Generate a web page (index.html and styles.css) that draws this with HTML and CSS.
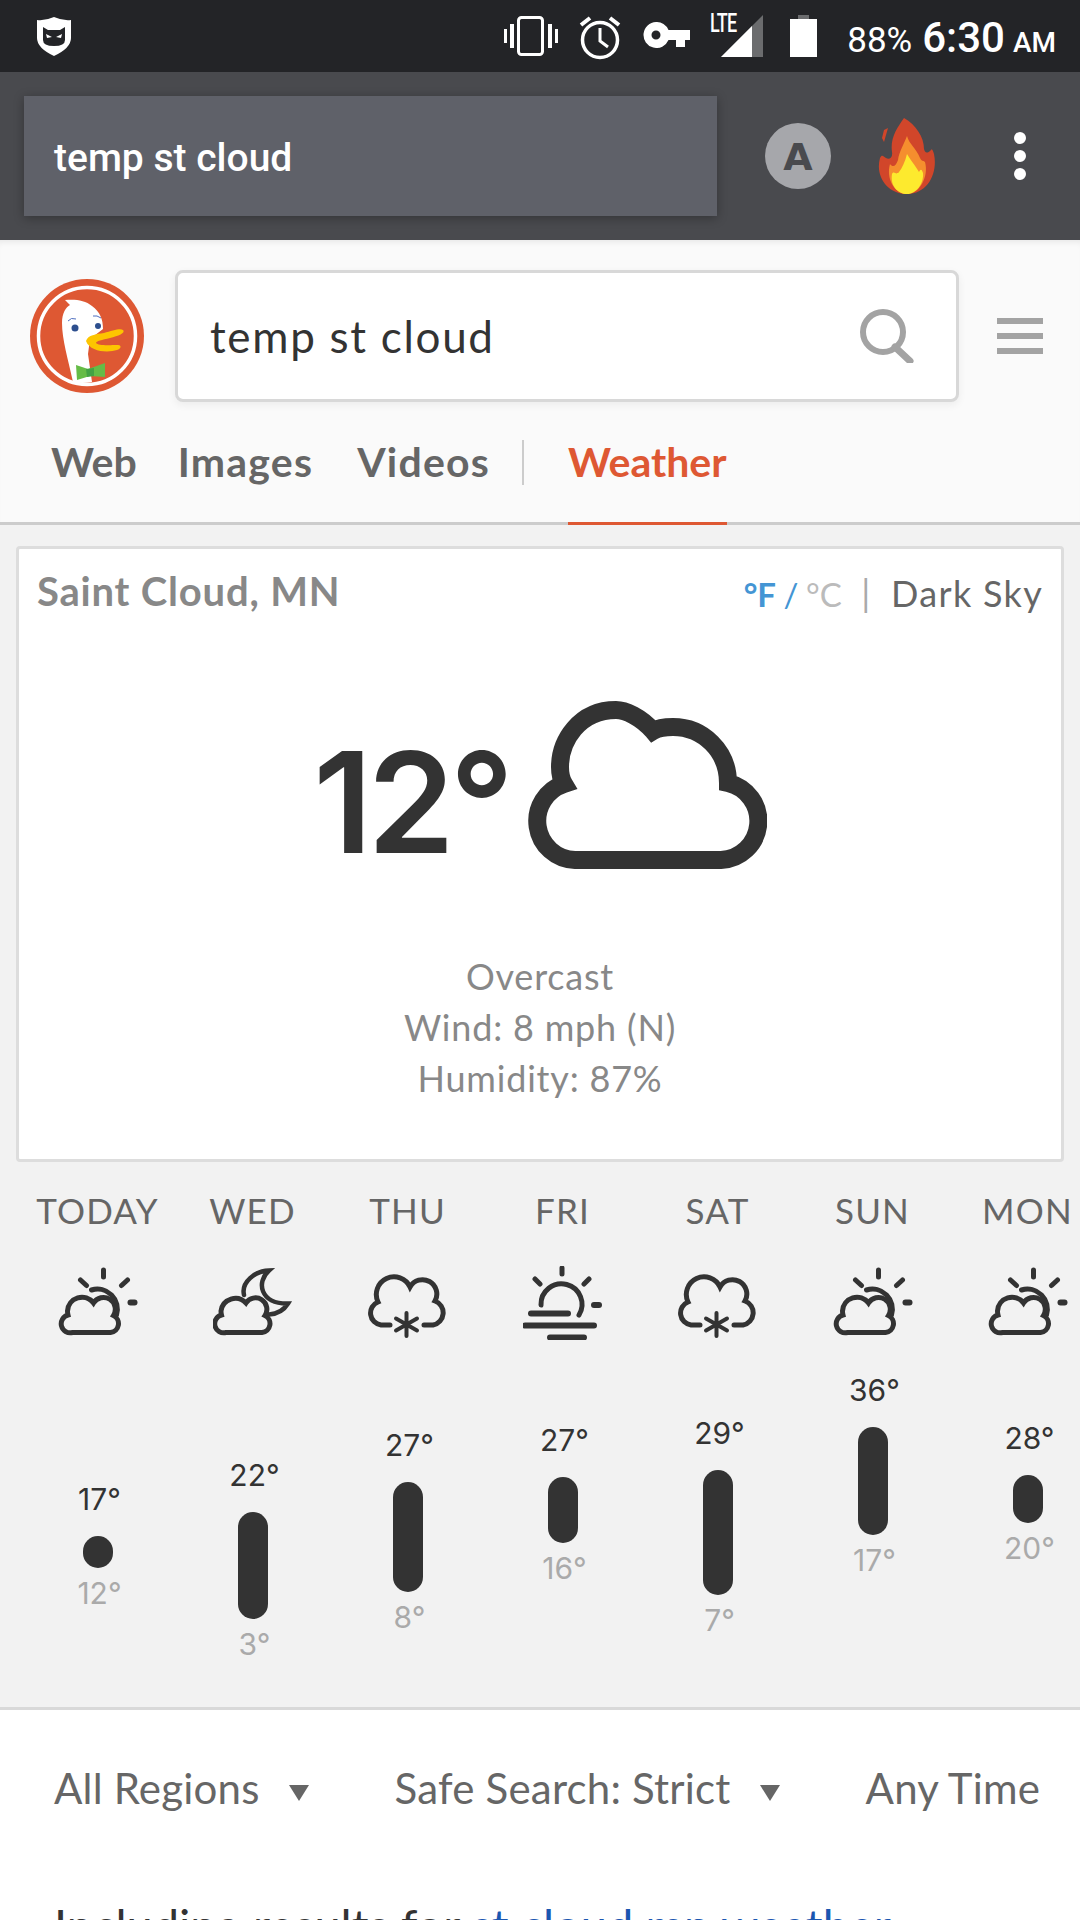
FILE: index.html
```html
<!DOCTYPE html>
<html lang="en">
<head>
    <meta charset="UTF-8">
    <meta name="viewport" content="width=device-width, initial-scale=1.0">
    <title>temp st cloud at DuckDuckGo</title>
    <link rel="stylesheet" href="styles.css">
</head>
<body>

    <svg class="icon-defs" width="0" height="0">
        <symbol id="partly" viewBox="0 0 80 70">
            <g fill="none" stroke="#333" stroke-width="5" stroke-linecap="round" transform="translate(1.500 0)">
                <path d="M13 64.500H51A9 9 0 0 0 54 47.500A11 11 0 0 0 34 35A14.500 14.500 0 0 0 8 43Q8 45 8.500 47A9 9 0 0 0 13 64.500Z"/>
                <path d="M32 22A20 20 0 0 1 57 47"/>
                <path d="M44 2V9M21 12L27 17.500M68 12L62 17.500"/>
                <path d="M71 34.500H75" stroke-width="6"/>
            </g>
        </symbol>
        <symbol id="night" viewBox="0 0 80 70">
            <g fill="none" stroke="#333" stroke-width="5" stroke-linecap="round">
                <path d="M13 64.500H49A9 9 0 0 0 52 47.500A11 11 0 0 0 33 35A14.500 14.500 0 0 0 8 43Q8 45 8.500 47A9 9 0 0 0 13 64.500Z"/>
                <path d="M31 27C28 14 42 3 56 2.500C43 14 47 36 75 35.500C71 42 64 46 56 46.500" stroke-width="4.500" stroke-linejoin="miter"/>
            </g>
        </symbol>
        <symbol id="snow" viewBox="0 0 80 70">
            <g fill="none" stroke="#333" stroke-width="5" stroke-linecap="round">
                <path d="M22 57H13A12 12 0 0 1 10 34A17 17 0 0 1 42 19A14 14 0 0 1 67 33A12.500 12.500 0 0 1 65 57H56"/>
                <path d="M38.500 45V68M28 50.500L49 62.500M49 50.500L28 62.500" stroke-width="4"/>
            </g>
        </symbol>
        <symbol id="fog" viewBox="0 0 80 74">
            <g fill="none" stroke="#333" stroke-width="5" stroke-linecap="round">
                <path d="M18 39A20.500 20.500 0 1 1 56 49"/>
                <path d="M39 2V8M12 13L17 18M66 13L61 18"/>
                <path d="M71 39H76" stroke-width="6"/>
                <path d="M8 47.500H45M2 59.500H71M27 71.500H61" stroke-width="6"/>
            </g>
        </symbol>
    </svg>

    <div class="status-bar">
        <svg class="shield" width="36" height="40" viewBox="0 0 36 40">
            <path d="M1 4Q9 5 18 1Q27 5 35 4V22Q35 32 18 40Q1 32 1 22Z" fill="#fff"/>
            <path d="M7 11L12 14H24L29 11V24Q29 30 18 30Q7 30 7 24Z" fill="#232427"/>
            <path d="M10 18L16 21L11 22ZM26 18L20 21L25 22Z" fill="#fff"/>
        </svg>
        <div class="status-right">
            <svg width="54" height="40" viewBox="0 0 54 40">
                <rect x="14.500" y="1.500" width="24" height="37" rx="3" fill="none" stroke="#fff" stroke-width="3"/>
                <path d="M0 13H3V27H0ZM6 8H10V32H6ZM44 8H48V32H44ZM51 13H54V27H51Z" fill="#fff"/>
            </svg>
            <svg class="alarm" width="44" height="46" viewBox="0 0 44 46">
                <circle cx="22" cy="26" r="17.500" fill="none" stroke="#fff" stroke-width="3.500"/>
                <path d="M22 14V27L30 33" fill="none" stroke="#fff" stroke-width="3"/>
                <path d="M3 11L12 4M41 11L32 4" stroke="#fff" stroke-width="4"/>
            </svg>
            <svg class="key" width="47" height="26" viewBox="0 0 47 26">
                <path d="M13 0A13 13 0 0 1 25.500 8H47V18H42V25H33V18H25.500A13 13 0 1 1 13 0ZM13 8.500A4.500 4.500 0 1 0 13 17.500A4.500 4.500 0 1 0 13 8.500Z" fill="#fff" fill-rule="evenodd"/>
            </svg>
            <div class="signal">
                <span class="lte">LTE</span>
                <svg width="42" height="42" viewBox="0 0 42 42">
                    <path d="M0 42L42 0V42Z" fill="#6b6c6e"/>
                    <path d="M0 42L31 11V42Z" fill="#fff"/>
                </svg>
            </div>
            <svg class="battery" width="27" height="42" viewBox="0 0 27 42">
                <rect x="8" y="0" width="11" height="5" fill="#6b6c6e"/>
                <rect x="0" y="4" width="27" height="38" fill="#fff"/>
            </svg>
            <div class="clock">
                <span class="pct">88%</span>
                <span class="time">6:30</span>
                <span class="ampm">AM</span>
            </div>
        </div>
    </div>

    <div class="toolbar">
        <div class="url-box">temp st cloud</div>
        <div class="circle-a">A</div>
        <svg class="flame" width="58" height="76" viewBox="0 0 58 76">
            <path d="M26 0C38 7 46 19 46 31C47 35 49 36 53 32C54 30 55 33 56 36C60 55 50 76 29 76C9 76 -3 58 2 40C4 36 5 38 8 40C11 42 15 40 14 34C12 20 19 10 26 0Z" fill="#d1462a"/>
            <path d="M6 12L10 10L6 24L4 20Z" fill="#d1462a"/>
            <path d="M29 18C31 26 38 30 42 40C44 44 45 42 47 44C51 58 42 76 29 76C16 76 8 60 12 46C15 50 18 48 20 42C21 34 26 26 29 18Z" fill="#f58e2e"/>
            <path d="M29 36C34 44 39 50 41 54C43 50 44 52 45 55C46 66 38 76 29 76C20 76 12 68 14 56C16 52 18 58 21 54C24 50 27 44 29 36Z" fill="#fdea2e"/>
        </svg>
        <div class="dots"><i></i><i></i><i></i></div>
    </div>

    <header class="ddg-head">
        <div class="search-row">
            <svg class="logo" width="114" height="114" viewBox="0 0 114 114">
                <circle cx="57" cy="57" r="57" fill="#de5833"/>
                <circle cx="57" cy="57" r="48.500" fill="#de5833" stroke="#fff" stroke-width="3.500"/>
                <path d="M43 103C38 80 32 60 32 44C32 34 36 28 40 26L35 21C45 20 55 21 62 27C70 33 73 40 73 50L60 60L58 75L62 103Q52 105 43 103Z" fill="#fff"/>
                <path d="M56 62C58 56 66 55 74 54C82 52 90 49 93 51C96 54 88 57 80 59C72 61 66 62 66 64C68 67 80 66 88 66C92 66 91 70 87 71C78 74 60 73 56 62Z" fill="#fdc500"/>
                <path d="M46 86L58 90L75 84L75 98L60 97L47 101Z" fill="#65bc46"/>
                <path d="M56 90L64 89L64 97L57 98Z" fill="#43a244"/>
                <circle cx="45" cy="49" r="3.500" fill="#2d4f8e"/>
                <circle cx="68" cy="47" r="3" fill="#2d4f8e"/>
                <path d="M38 42Q41 38 46 40M63 37Q67 36 71 39" fill="none" stroke="#4f6fc0" stroke-width="1"/>
            </svg>
            <div class="search-box">
                <span class="search-text">temp st cloud</span>
                <svg class="search-icon" width="54" height="54" viewBox="0 0 54 54">
                    <circle cx="23" cy="23" r="20" fill="none" stroke="#a3a3a3" stroke-width="6"/>
                    <path d="M35 38L50 52" stroke="#a3a3a3" stroke-width="7" stroke-linecap="round"/>
                </svg>
            </div>
            <div class="hamburger"><i></i><i></i><i></i></div>
        </div>
        <nav class="tabs">
            <a href="#">Web</a>
            <a href="#">Images</a>
            <a href="#">Videos</a>
            <span class="tab-sep"></span>
            <a href="#" class="active">Weather</a>
        </nav>
    </header>

    <section class="weather">
        <div class="card">
            <div class="card-top">
                <span class="place">Saint Cloud, MN</span>
                <span class="units"><b>°F</b> <em>/</em> <u>°C</u> <s>|</s> Dark Sky</span>
            </div>
            <div class="now">
                <span class="now-temp">12°</span>
                <svg width="240" height="170" viewBox="0 0 240 170">
                    <path d="M48 159H194A39 39 0 0 0 201 82C201 50 176 26 146 26C138 26 131 27 126 30C114 16 98 9 89 9C52 9 33 40 33 66C33 72 34 78 37 83A39 39 0 0 0 48 159Z" fill="none" stroke="#333" stroke-width="18"/>
                </svg>
            </div>
            <div class="conditions">
                <div>Overcast</div>
                <div>Wind: 8 mph (N)</div>
                <div>Humidity: 87%</div>
            </div>
        </div>

        <div class="forecast">
            <div class="day">
                <div class="day-name">TODAY</div>
                <svg class="day-icon" width="80" height="70"><use href="#partly"/></svg>
                <div class="high" style="margin-top:137px">17°</div>
                <div class="bar" style="height:32px"></div>
                <div class="low">12°</div>
            </div>
            <div class="day">
                <div class="day-name">WED</div>
                <svg class="day-icon" width="80" height="70"><use href="#night"/></svg>
                <div class="high" style="margin-top:113px">22°</div>
                <div class="bar" style="height:107px"></div>
                <div class="low">3°</div>
            </div>
            <div class="day">
                <div class="day-name">THU</div>
                <svg class="day-icon" width="80" height="70"><use href="#snow"/></svg>
                <div class="high" style="margin-top:83px">27°</div>
                <div class="bar" style="height:110px"></div>
                <div class="low">8°</div>
            </div>
            <div class="day">
                <div class="day-name">FRI</div>
                <svg class="day-icon" width="80" height="74"><use href="#fog"/></svg>
                <div class="high" style="margin-top:78px">27°</div>
                <div class="bar" style="height:66px"></div>
                <div class="low">16°</div>
            </div>
            <div class="day">
                <div class="day-name">SAT</div>
                <svg class="day-icon" width="80" height="70"><use href="#snow"/></svg>
                <div class="high" style="margin-top:71px">29°</div>
                <div class="bar" style="height:125px"></div>
                <div class="low">7°</div>
            </div>
            <div class="day">
                <div class="day-name">SUN</div>
                <svg class="day-icon" width="80" height="70"><use href="#partly"/></svg>
                <div class="high" style="margin-top:28px">36°</div>
                <div class="bar" style="height:108px"></div>
                <div class="low">17°</div>
            </div>
            <div class="day">
                <div class="day-name">MON</div>
                <svg class="day-icon" width="80" height="70"><use href="#partly"/></svg>
                <div class="high" style="margin-top:76px">28°</div>
                <div class="bar" style="height:48px"></div>
                <div class="low">20°</div>
            </div>
        </div>
    </section>

    <div class="filters">
        <span class="filter">All Regions <i class="caret"></i></span>
        <span class="filter">Safe Search: Strict <i class="caret"></i></span>
        <span class="filter">Any Time</span>
    </div>

    <p class="including">Including results for <a href="#">st cloud mn weather</a></p>

</body>
</html>
```

FILE: styles.css
```css
html, body {
    height: 1920px;
    overflow: hidden;
}

body {
    margin: 0;
    font-family: Lato, "Open Sans", sans-serif;
    background-color: #fff;
    color: #333;
}

.icon-defs {
    display: block;
    height: 0;
}

/* android chrome */
.status-bar {
    height: 72px;
    background-color: #232427;
    display: flex;
    align-items: center;
    justify-content: space-between;
    padding: 0 24px 0 36px;
    color: #fff;
    font-family: Roboto, sans-serif;
}

.status-right {
    display: flex;
    align-items: center;
}

.alarm {
    margin-left: 20px;
    margin-top: 2px;
}

.key {
    margin-left: 21px;
    margin-top: -2px;
}

.signal {
    position: relative;
    margin-left: 31px;
    height: 42px;
}

.signal svg {
    display: block;
}

.lte {
    position: absolute;
    left: -11px;
    top: -6px;
    font-size: 25px;
    font-weight: 500;
    letter-spacing: -1px;
    transform: scaleX(0.72);
    transform-origin: left;
}

.battery {
    margin-left: 27px;
}

.clock {
    margin-left: 30px;
    margin-top: 2px;
    display: flex;
    align-items: baseline;
    white-space: nowrap;
}

.pct {
    font-size: 35px;
    margin-right: 10px;
}

.time {
    font-size: 42px;
    font-weight: 500;
    margin-right: 8px;
}

.ampm {
    font-size: 28px;
    font-weight: 500;
}

.toolbar {
    height: 168px;
    background-color: #494a4e;
    display: flex;
    align-items: center;
    padding-left: 24px;
    position: relative;
}

.url-box {
    width: 693px;
    height: 120px;
    box-sizing: border-box;
    padding-left: 30px;
    background-color: #5f6169;
    box-shadow: 0 2px 10px rgba(0, 0, 0, 0.3);
    color: #fff;
    font-family: Roboto, sans-serif;
    font-size: 39px;
    font-weight: 500;
    line-height: 124px;
}

.circle-a {
    width: 66px;
    height: 66px;
    margin-left: 48px;
    border-radius: 50%;
    background-color: #a6a7ab;
    color: #494a4e;
    font-family: "DejaVu Sans", sans-serif;
    font-size: 38px;
    font-weight: bold;
    line-height: 68px;
    text-align: center;
}

.flame {
    margin-left: 47px;
}

.dots {
    margin-left: 78px;
    display: flex;
    flex-direction: column;
    gap: 6px;
}

.dots i {
    display: block;
    width: 12px;
    height: 12px;
    border-radius: 50%;
    background-color: #fff;
}

/* ddg header */
.ddg-head {
    height: 285px;
    box-sizing: border-box;
    background-color: #fafafa;
    border-bottom: 3px solid #ccc;
    box-shadow: inset 0 6px 6px -4px rgba(0, 0, 0, 0.08);
}

.search-row {
    display: flex;
    align-items: center;
    padding: 30px 0 0 30px;
}

.search-box {
    width: 784px;
    height: 132px;
    box-sizing: border-box;
    margin-left: 31px;
    padding: 0 42px 0 32px;
    display: flex;
    align-items: center;
    justify-content: space-between;
    background-color: #fff;
    border: 3px solid #d8d8d8;
    border-radius: 8px;
    box-shadow: 0 3px 8px rgba(0, 0, 0, 0.06);
}

.search-text {
    font-size: 44px;
    letter-spacing: 1.700px;
    color: #333;
}

.hamburger {
    margin-left: 38px;
    display: flex;
    flex-direction: column;
    gap: 9px;
}

.hamburger i {
    display: block;
    width: 46px;
    height: 6px;
    background-color: #a3a3a3;
}

.tabs {
    display: flex;
    align-items: center;
    height: 120px;
    padding-left: 51px;
}

.tabs a {
    position: relative;
    color: #666;
    text-decoration: none;
    font-size: 41px;
    font-weight: bold;
    letter-spacing: 1.200px;
    margin-right: 44px;
    line-height: 120px;
}

.tabs a:first-child {
    letter-spacing: 0;
    margin-right: 41px;
}

.tabs a.active {
    color: #de5833;
    letter-spacing: 0;
}

.tabs a.active::after {
    content: "";
    position: absolute;
    left: 0;
    right: 0;
    bottom: -3px;
    height: 3px;
    background-color: #de5833;
}

.tab-sep {
    width: 2px;
    height: 45px;
    margin-left: -12px;
    margin-right: 44px;
    background-color: #ccc;
}

/* weather */
.weather {
    height: 1185px;
    box-sizing: border-box;
    background-color: #f2f2f2;
    border-bottom: 3px solid #d9d9d9;
    padding-top: 21px;
    overflow: hidden;
}

.card {
    width: 1048px;
    height: 616px;
    box-sizing: border-box;
    margin-left: 16px;
    background-color: #fff;
    border: 3px solid #ddd;
    border-radius: 4px;
    padding: 0 18px;
}

.card-top {
    display: flex;
    justify-content: space-between;
    align-items: center;
    height: 84px;
}

.place {
    font-size: 40px;
    font-weight: bold;
    letter-spacing: 0.800px;
    color: #888;
}

.units {
    font-size: 36px;
    color: #666;
    letter-spacing: 1.300px;
    padding-top: 4px;
}

.units b {
    font-size: 33px;
    letter-spacing: 0;
    color: #4495d4;
}

.units em {
    font-size: 33px;
    letter-spacing: 0;
    font-style: normal;
    color: #4495d4;
    margin: 0 -3px;
}

.units u {
    font-size: 33px;
    letter-spacing: 0;
    text-decoration: none;
    color: #bbb;
}

.units s {
    text-decoration: none;
    color: #aaa;
    margin: 0 9px;
}

.now {
    display: flex;
    align-items: center;
    justify-content: center;
    margin-top: 68px;
    height: 170px;
}

.now-temp {
    font-family: Inter, Lato, sans-serif;
    font-size: 140px;
    font-weight: 600;
    letter-spacing: -5px;
    color: #333;
    margin-right: 18px;
    padding-top: 32px;
}

.conditions {
    margin-top: 80px;
    text-align: center;
    font-size: 36px;
    letter-spacing: 0.800px;
    line-height: 51px;
    color: #888;
}

.forecast {
    display: flex;
    padding-left: 20px;
}

.day {
    flex: 0 0 155px;
    display: flex;
    flex-direction: column;
    align-items: center;
}

.day-name {
    margin-top: 26px;
    font-size: 35px;
    letter-spacing: 1.200px;
    line-height: 44px;
    color: #666;
}

.day-icon {
    height: 74px;
    margin-top: 34px;
    margin-bottom: 4px;
    align-self: center;
}

.high {
    padding-left: 4px;
    font-family: Inter, Lato, sans-serif;
    font-size: 30px;
    line-height: 36px;
    color: #333;
}

.bar {
    width: 30px;
    margin-top: 19px;
    border-radius: 15px;
    background-color: #333;
}

.low {
    padding-left: 4px;
    margin-top: 7px;
    font-family: Inter, Lato, sans-serif;
    font-size: 30px;
    line-height: 36px;
    color: #aaa;
}

/* filters */
.filters {
    display: flex;
    align-items: center;
    height: 156px;
    padding-left: 54px;
    white-space: nowrap;
}

.filter {
    font-size: 42px;
    letter-spacing: 0.200px;
    color: #666;
    margin-right: 86px;
}

.caret {
    display: inline-block;
    width: 0;
    height: 0;
    margin-left: 18px;
    vertical-align: middle;
    border-left: 10px solid transparent;
    border-right: 10px solid transparent;
    border-top: 16px solid #666;
}

.including {
    margin: 31px 0 0 54px;
    font-size: 47px;
    color: #333;
    white-space: nowrap;
}

.including a {
    color: #1a56b0;
    text-decoration: none;
}
```
